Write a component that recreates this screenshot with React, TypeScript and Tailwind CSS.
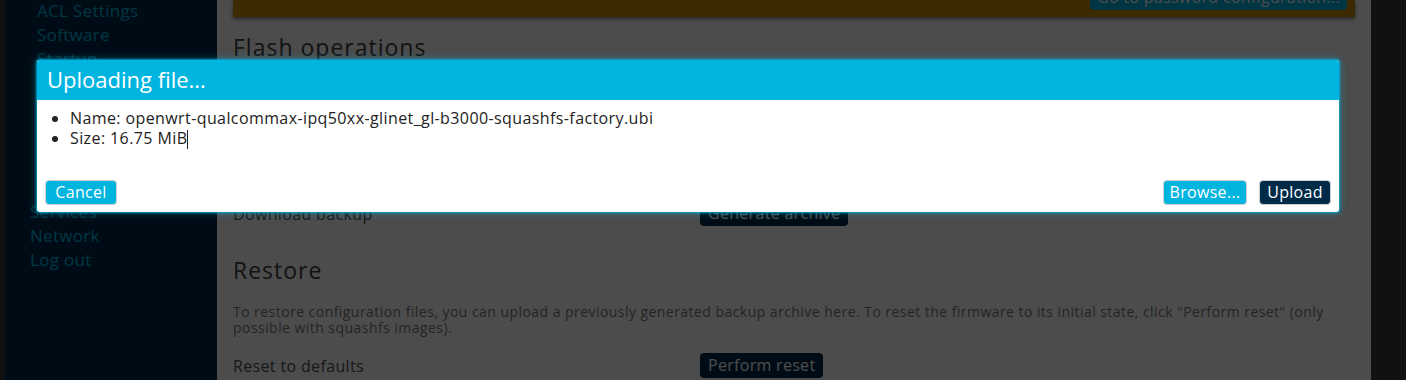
import React from "react";

const subItems = [
  "ACL Settings",
  "Software",
  "Startup",
  "Scheduled Tasks",
  "Mount Points",
  "LED Configuration",
  "Backup / Flash Firmware",
  "Reboot",
];

const topItems = ["Services", "Network", "Log out"];

const App = () => {
  return (
    <div className="relative w-[1406px] h-[380px] overflow-hidden bg-[#393939] font-['Open_Sans',sans-serif]">
      {/* page under the dialog */}
      <div className="flex h-full pl-[5px] pr-[35px]">
        <aside className="w-[212px] shrink-0 bg-[#002b49] text-[17px] tracking-[0.3px] leading-[24px] text-[#00b4e0]">
          <ul className="-mt-[1px]">
            {subItems.map((item) => (
              <li key={item} className="pl-[32px] whitespace-nowrap">
                {item}
              </li>
            ))}
          </ul>
          <ul className="mt-[9px]">
            {topItems.map((item) => (
              <li key={item} className="pl-[25px]">
                {item}
              </li>
            ))}
          </ul>
        </aside>

        <main className="flex-1 bg-white px-4">
          <div className="h-[17px] bg-[#cc8c00] shadow-[0_2px_4px_rgba(0,0,0,0.5)] flex justify-end items-end pr-2 pb-[7px] overflow-hidden">
            <button className="shrink-0 w-[257px] h-[25px] rounded-[4px] bg-[#00b4e0] text-white text-[16px] tracking-[0.3px] leading-[25px]">
              Go to password configuration...
            </button>
          </div>

          <h2 className="mt-[15px] text-[23px] tracking-[1px] leading-[30px] text-[#404040]">
            Flash operations
          </h2>

          <div className="h-[139px] overflow-hidden pt-3 text-[14px] text-[#777]">
            <div className="flex gap-4 text-[16px] text-[#404040]">
              <span>Actions</span>
              <span>Configuration</span>
            </div>
            <h3 className="mt-4 text-[19px] text-[#404040]">Backup</h3>
            <p className="mt-2">
              Click "Generate archive" to download a tar archive of the current
              configuration files.
            </p>
          </div>

          <div className="flex items-center h-[25px] text-[16px] tracking-[0.35px] text-[#505050]">
            <span className="w-[467px] shrink-0">Download backup</span>
            <button className="h-[25px] px-[8px] rounded-[4px] bg-[#002b49] text-white text-[16px] tracking-[0.3px] leading-[25px]">
              Generate archive
            </button>
          </div>

          <h2 className="mt-[29px] text-[23px] tracking-[1px] leading-[30px] text-[#404040]">
            Restore
          </h2>
          <p className="mt-[19px] text-[14px] tracking-[0.45px] leading-[16px] text-[#7a7a7a]">
            To restore configuration files, you can upload a previously
            generated backup archive here. To reset the firmware to its initial
            state, click "Perform reset" (only possible with squashfs images).
          </p>
          <div className="mt-[17px] flex items-center h-[25px] text-[16px] tracking-[0.35px] text-[#505050]">
            <span className="w-[467px] shrink-0">Reset to defaults</span>
            <button className="h-[25px] px-[8px] rounded-[4px] bg-[#002b49] text-white text-[16px] tracking-[0.3px] leading-[25px]">
              Perform reset
            </button>
          </div>
        </main>
      </div>

      {/* dim layer */}
      <div className="absolute inset-0 bg-black/70" />

      {/* dialog */}
      <div className="absolute left-[37px] top-[60px] w-[1302px] rounded-[3px] bg-white shadow-[0_0_2px_1px_rgba(0,180,224,0.85),0_0_7px_2px_rgba(0,180,224,0.3)]">
        <div className="h-[40px] rounded-t-[3px] bg-[#00b4e0] px-[10px] text-[22px] leading-[38px] text-white">
          Uploading file...
        </div>
        <ul className="list-disc pl-[33px] pt-[8px] text-[16px] tracking-[0.4px] leading-[20px] text-[#222]">
          <li>Name: openwrt-qualcommax-ipq50xx-glinet_gl-b3000-squashfs-factory.ubi</li>
          <li>
            Size: 16.75 MiB
            <span className="inline-block w-px h-[19px] bg-[#222] align-middle" />
          </li>
        </ul>
        <div className="mt-[31px] flex justify-between px-[8px] pb-[7px]">
          <button className="h-[25px] w-[72px] rounded-[4px] border border-[#d0d0d0] bg-[#00b4e0] text-white text-[16px] tracking-[0.3px] leading-[23px]">
            Cancel
          </button>
          <div className="flex gap-[12px]">
            <button className="h-[25px] w-[84px] rounded-[4px] border border-[#d0d0d0] bg-[#00b4e0] text-white text-[16px] tracking-[0.3px] leading-[23px]">
              Browse...
            </button>
            <button className="h-[25px] w-[72px] rounded-[4px] border border-[#d0d0d0] bg-[#002b49] text-white text-[16px] tracking-[0.3px] leading-[23px]">
              Upload
            </button>
          </div>
        </div>
      </div>
    </div>
  );
};

export default App;
